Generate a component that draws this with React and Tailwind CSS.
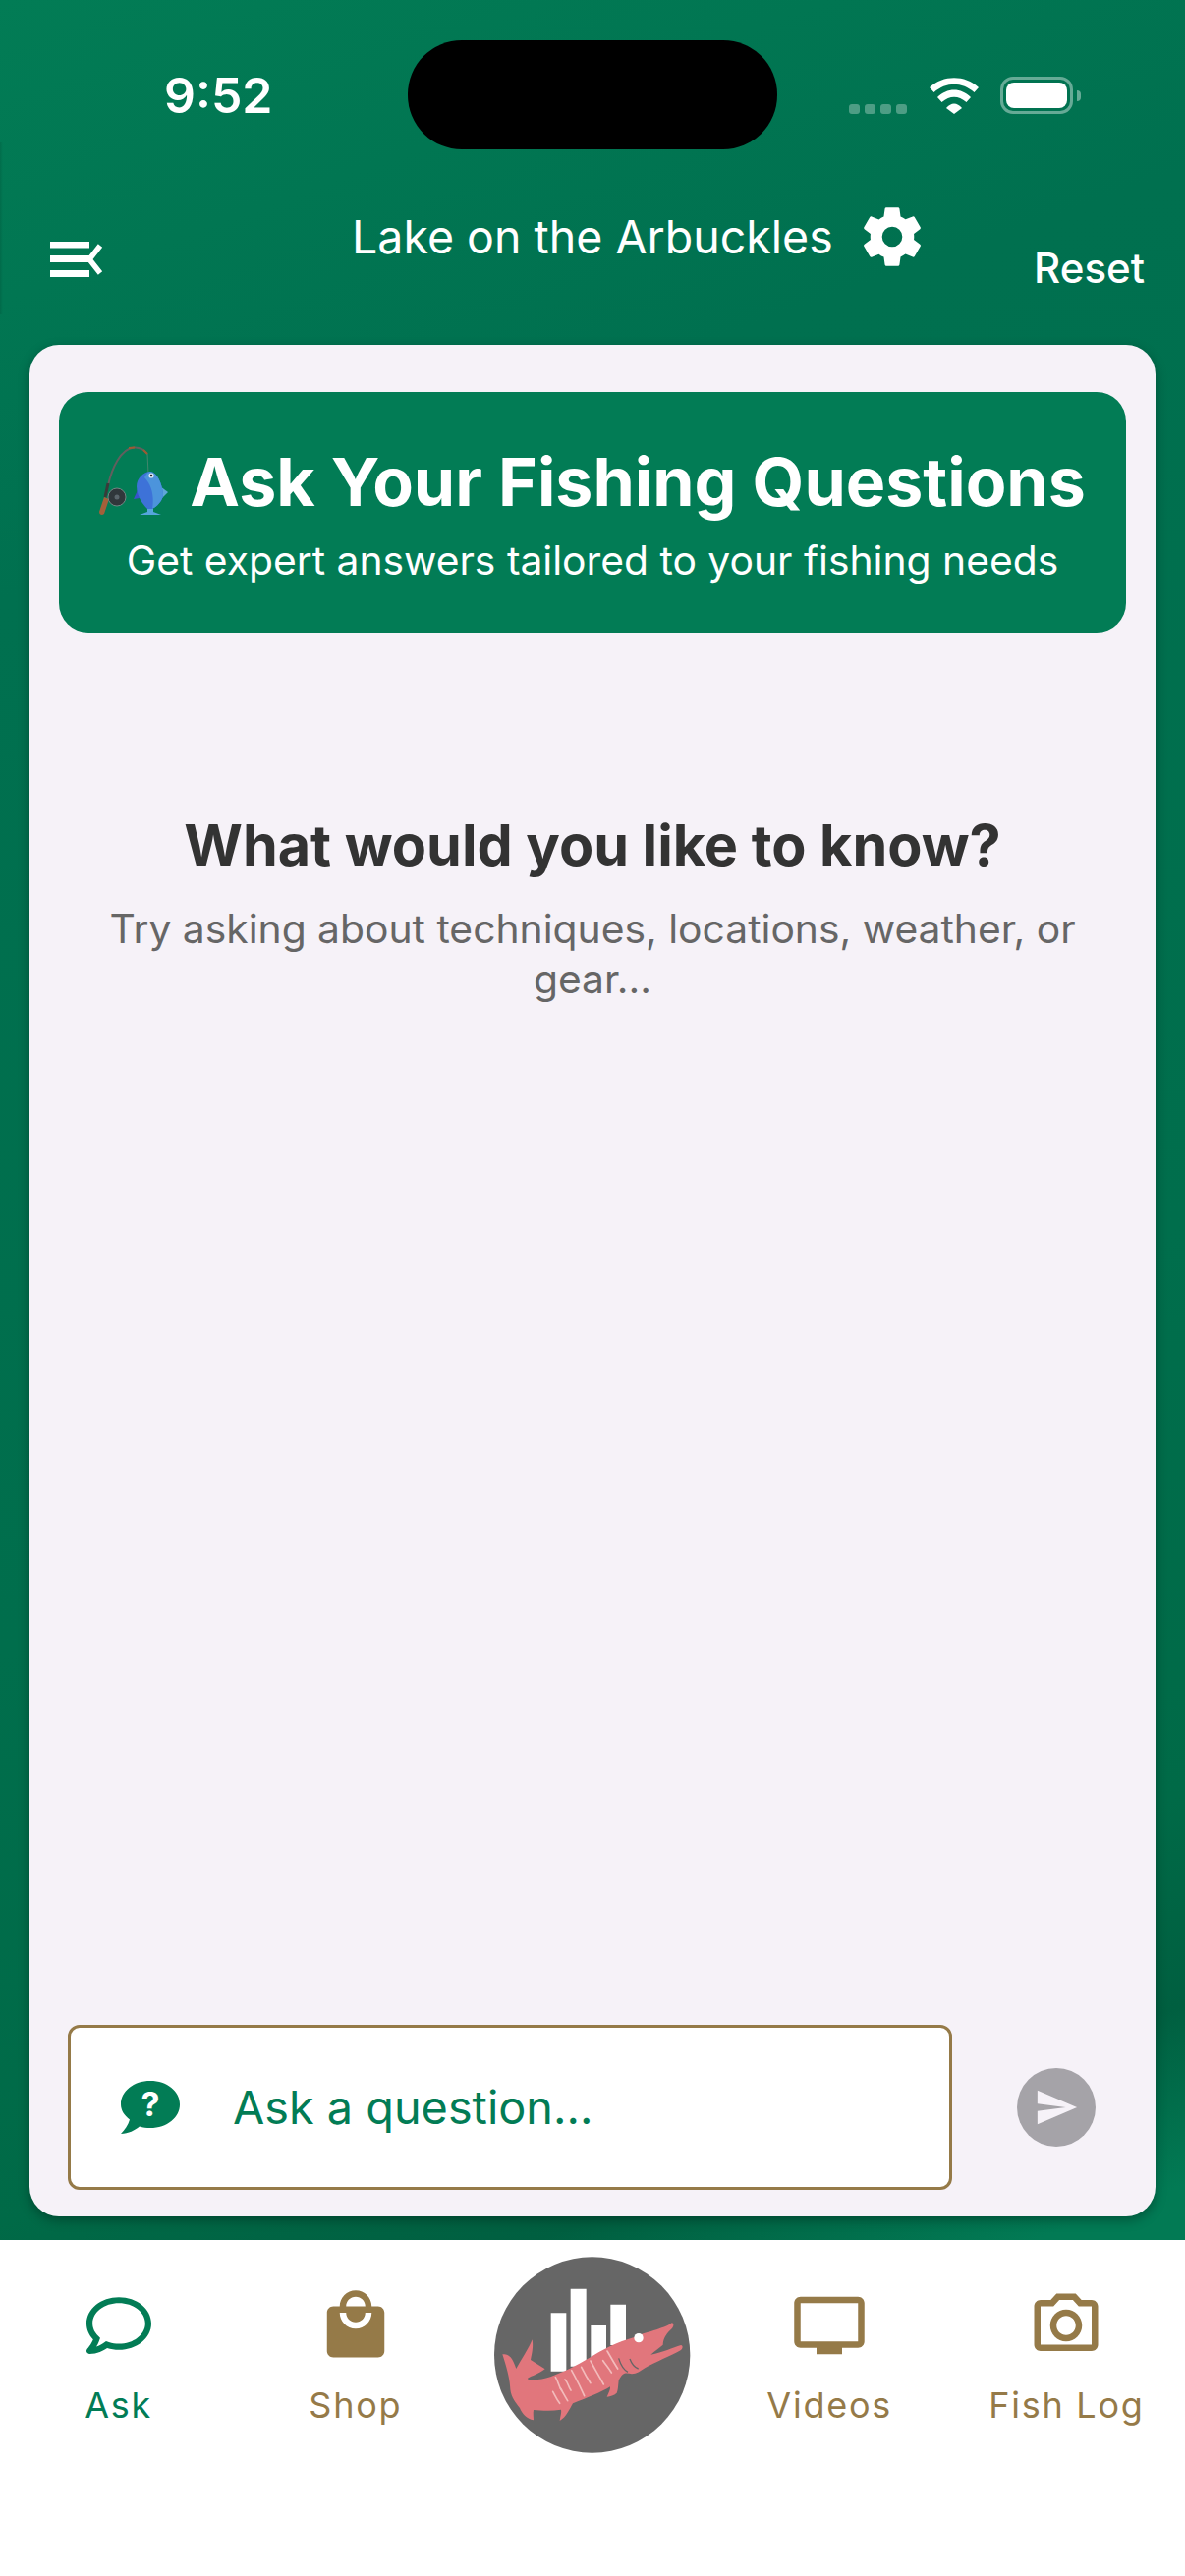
import { MdLocalMall, MdOutlinePhotoCamera, MdSend, MdTv } from "react-icons/md";
import { FaRegComment } from "react-icons/fa";
import { IoSettingsSharp } from "react-icons/io5";

function StatusIcons() {
  return (
    <div className="flex items-start mr-[106px]">
      <div className="flex gap-[5px] mt-[27px] mr-[23px]">
        <span className="w-[11px] h-[10px] rounded-[3px] bg-white/30" />
        <span className="w-[11px] h-[10px] rounded-[3px] bg-white/30" />
        <span className="w-[11px] h-[10px] rounded-[3px] bg-white/30" />
        <span className="w-[11px] h-[10px] rounded-[3px] bg-white/30" />
      </div>
      <svg width="50" height="37" viewBox="0 0 50 37" className="mr-[22px] block">
        <path d="M0 10 C14 -3 36 -3 50 10 L45.5 15 C33 4 17 4 4.5 15 Z" fill="#fff" />
        <path d="M8 20 C18 10 32 10 42 20 L37.5 25 C29 18 21 18 12.5 25 Z" fill="#fff" />
        <path d="M17 31 C22 25 28 25 33 31 L25 37 Z" fill="#fff" />
      </svg>
      <div className="flex items-center -mt-[1px]">
        <div className="w-[74px] h-[38px] rounded-[13px] border-[3px] border-white/40 p-[3px]">
          <div className="w-full h-full rounded-[8px] bg-white" />
        </div>
        <span className="w-[4px] h-[11px] ml-[4px] rounded-r-[4px] bg-white/40" />
      </div>
    </div>
  );
}

function MenuIcon() {
  return (
    <svg width="54" height="36" viewBox="0 0 54 36" className="block">
      <rect x="0" y="0" width="40" height="6.5" fill="#fff" />
      <rect x="0" y="14" width="40" height="7" fill="#fff" />
      <rect x="0" y="29" width="40" height="7" fill="#fff" />
      <path d="M51 4 L40 18 L51 32" fill="none" stroke="#fff" strokeWidth="5.5" />
    </svg>
  );
}

function QuestionBubble() {
  return (
    <div className="relative ml-[51px] w-[60px] h-[54px] flex justify-center">
      <svg width="60" height="54" viewBox="0 0 60 54" className="absolute left-0 top-0">
        <path
          d="M30 0 C47 0 60 10.5 60 24 C60 37.5 47 48 30 48 C26 48 22.5 47.4 19 46.4 C14 50.5 8 53.5 0 54 C4 50 7.5 45 9 39.5 C3.5 35.2 0 30 0 24 C0 10.5 13 0 30 0 Z"
          fill="#027c55"
        />
      </svg>
      <span className="relative text-[34px] leading-[48px] font-bold text-white">?</span>
    </div>
  );
}

function FishingEmoji() {
  return (
    <svg width="71" height="72" viewBox="0 0 71 72" className="shrink-0">
      <path d="M9 40 C13 22 22 3 35 1.5 C41 1 46 4 49 8" fill="none" stroke="#625f5e" strokeWidth="2" />
      <path d="M30 2 L36 1.5 M45 4 L49 8" stroke="#9a5c32" strokeWidth="2" />
      <path d="M49 8 L50 28" stroke="#5d8a76" strokeWidth="0.7" />
      <path d="M9 38 L6 52" stroke="#3a3a3a" strokeWidth="3" />
      <path d="M5 52 L10 54 L5 69 C3 71 0 70 0 67 Z" fill="#a3603a" />
      <circle cx="18" cy="52" r="9" fill="#30373b" stroke="#8a8f92" strokeWidth="0.8" />
      <circle cx="18" cy="52" r="2.5" fill="#5b656b" />
      <path d="M39 45 L35 54 L41 53 Z" fill="#3a50cc" />
      <path d="M62 41 L70 47 L61 56 Z" fill="#5fa6da" />
      <path d="M49 64 L55 64 L55 67 L63 70 L41 70 L49 67 Z" fill="#56a5dc" />
      <path d="M52 26 C59 27 64 38 65 49 C65 56 58 62 54 64 L49 64 C43 58 38 50 38 41 C38 33 45 26 52 26 Z" fill="#3d72d8" />
      <path d="M52 26 C59 27 64 38 65 49 C65 56 58 62 54 64 C56 52 54 40 46 32 C48 28 50 26 52 26 Z" fill="#4c94dc" />
      <circle cx="53" cy="30" r="2.6" fill="#dfe9f2" />
      <circle cx="53" cy="30" r="1.2" fill="#222" />
    </svg>
  );
}

function LogoMark() {
  return (
    <svg width="200" height="200" viewBox="70 50 600 600" className="block">
      <circle cx="369" cy="350" r="299" fill="#666666" />
      <path d="M243 222 H290 V400 H243 Z M303 148 H351 V385 H303 Z M365 260 H412 V355 H365 Z M425 196 H472 V320 H425 Z" fill="#fff" />
      <path
        d="M95 348 C110 345 125 352 137 392 C155 360 175 330 186 303 C190 325 185 345 181 365 L225 393 C205 408 185 414 172 421 C172 426 180 426 190 426 C225 426 255 412 300 392 C340 372 380 345 420 325 C445 312 475 302 500 295 C525 282 590 270 612 252 C620 252 618 264 612 270 C600 282 586 295 585 319 C575 328 560 338 548 349 C585 342 615 328 640 320 C647 322 646 330 640 335 C610 352 560 372 530 390 C515 400 505 407 490 408 C475 404 462 400 450 428 C448 445 448 458 444 466 C435 474 425 476 414 478 C420 465 425 455 424 447 C395 465 355 480 310 498 C300 515 290 540 270 551 C272 535 276 525 274 517 C245 522 215 520 190 518 C188 528 190 540 190 549 C170 545 155 530 148 512 C135 495 122 480 119 455 C118 430 112 400 95 348 Z"
        fill="#e1767c"
      />
      <circle cx="511" cy="298" r="14" fill="#fff" />
      <path d="M450 360 C456 380 465 395 478 402 M484 362 C490 378 498 388 510 392" fill="none" stroke="#666" strokeWidth="4" />
      <g fill="none" stroke="#f3bcbc" strokeWidth="5" strokeLinecap="round">
        <path d="M257 418 C268 435 265 445 276 458" />
        <path d="M286 425 C296 435 295 445 304 458" />
        <path d="M306 397 C318 420 325 430 345 475" />
        <path d="M336 387 C345 405 350 415 364 436" />
        <path d="M364 368 C378 395 385 405 404 440" />
        <path d="M402 367 C412 382 418 388 428 404" />
        <path d="M415 338 C425 355 430 365 447 392" />
        <path d="M249 462 C256 475 260 485 270 498" />
        <path d="M272 452 C280 465 285 475 294 490" />
      </g>
    </svg>
  );
}

function NavItem({ icon, label, active }) {
  return (
    <div className={`flex flex-col items-center ${active ? "text-[#027c55]" : "text-[#957a48]"}`}>
      <div className="h-[78px] flex items-center justify-center">{icon}</div>
      <span className="mt-[20px] text-[36px] leading-[44px] tracking-[1.75px] font-normal whitespace-nowrap">{label}</span>
    </div>
  );
}

export default function App() {
  return (
    <div className="relative w-[1206px] h-[2622px] overflow-hidden flex flex-col font-['Inter',sans-serif] bg-[linear-gradient(160deg,#027c55_0%,#00704f_20%,#006e4c_55%,#006a47_74%,#005f40_81%,#027a54_87%)]">
      <div className="absolute left-0 top-[145px] w-[3px] h-[175px] bg-gradient-to-r from-black/10 to-transparent" />

      {/* status bar */}
      <div className="h-[192px] pt-[41px] flex items-start justify-between relative shrink-0">
        <span className="ml-[167px] mt-[28px] text-[50px] leading-[56px] font-semibold text-white">9:52</span>
        <div className="absolute left-[415px] top-[41px] w-[376px] h-[111px] rounded-[55px] bg-black" />
        <div className="mt-[38px]">
          <StatusIcons />
        </div>
      </div>

      {/* header */}
      <div className="h-[159px] shrink-0 flex items-start text-white">
        <div className="ml-[51px] mt-[54px]">
          <MenuIcon />
        </div>
        <div className="ml-[253px] flex items-center mt-[14px]">
          <span className="text-[46.5px] leading-[70px] whitespace-nowrap">Lake on the Arbuckles</span>
          <IoSettingsSharp className="ml-[27px] text-[66px]" />
        </div>
        <span className="ml-auto mr-[41px] mt-[56px] text-[42px] leading-[50px] font-medium">Reset</span>
      </div>

      {/* main card */}
      <div className="h-[1905px] shrink-0 mx-[30px] rounded-[30px] bg-[#f6f2f8] shadow-[0_4px_12px_rgba(0,0,0,0.3)] flex flex-col px-[30px] pt-[48px]">
        <div className="h-[245px] rounded-[30px] bg-[#027c55] flex flex-col items-center pt-[49px] text-white">
          <div className="flex items-center">
            <FishingEmoji />
            <span className="ml-[21px] text-[68px] leading-[84px] font-bold whitespace-nowrap">Ask Your Fishing Questions</span>
          </div>
          <span className="mt-[10px] text-[40.8px] leading-[56px] whitespace-nowrap">Get expert answers tailored to your fishing needs</span>
        </div>

        <div className="mt-[180px] flex flex-col items-center text-center">
          <h2 className="text-[57.5px] leading-[72px] font-bold text-[#333333]">What would you like to know?</h2>
          <p className="mt-[24px] w-[1040px] text-[40.8px] leading-[51px] text-[#666666]">
            Try asking about techniques, locations, weather, or gear...
          </p>
        </div>

        <div className="mt-auto mb-[27px] flex items-center">
          <div className="ml-[9px] w-[900px] h-[168px] rounded-[12px] border-[3px] border-[#957a48] bg-white flex items-center">
            <QuestionBubble />
            <span className="ml-[54px] text-[46.8px] text-[#027c55]">Ask a question...</span>
          </div>
          <div className="ml-[66px] w-[80px] h-[80px] rounded-full bg-[#a5a3a8] flex items-center justify-center">
            <MdSend className="text-[46px] text-[#f6f2f8]" />
          </div>
        </div>
      </div>

      {/* bottom nav */}
      <div className="mt-[24px] flex-1 bg-white grid grid-cols-5 pt-[48px]">
        <NavItem active label="Ask" icon={<FaRegComment className="text-[66px]" />} />
        <NavItem label="Shop" icon={<MdLocalMall className="text-[78px]" />} />
        <div className="flex justify-center -mt-[31px]">
          <div className="h-[200px]">
            <LogoMark />
          </div>
        </div>
        <NavItem label="Videos" icon={<MdTv className="text-[78px]" />} />
        <NavItem label="Fish Log" icon={<MdOutlinePhotoCamera className="text-[78px]" />} />
      </div>
    </div>
  );
}
